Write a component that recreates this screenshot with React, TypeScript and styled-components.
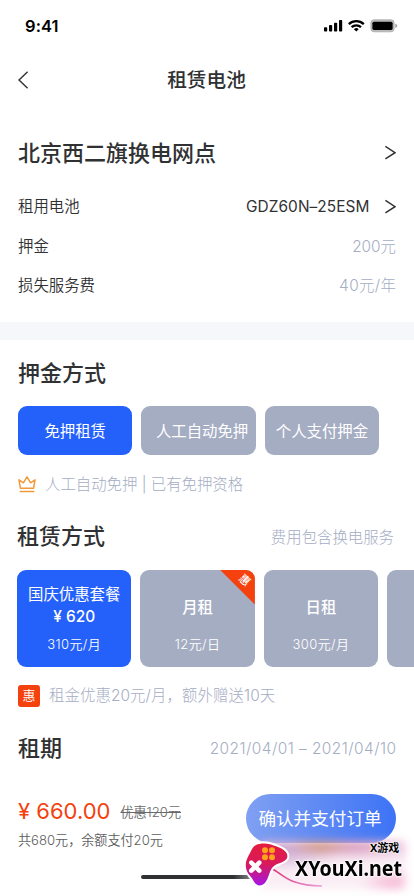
import React from 'react';
import styled, { createGlobalStyle } from 'styled-components';

const GlobalStyle = createGlobalStyle`
  * { box-sizing: border-box; }
  html, body { margin: 0; padding: 0; background: #fff; overflow: hidden; }
  body { font-family: Inter, "Noto Sans CJK SC", sans-serif; }
`;

const ink = '#303133';
const muted = '#a5adc3';
const blue = '#2461fb';
const orange = '#f4410d';

const Screen = styled.main`
  position: relative;
  width: 414px;
  height: 896px;
  overflow: hidden;
  background: #fff;
  color: ${ink};
  display: flex;
  flex-direction: column;
`;

const StatusBar = styled.div`
  height: 51px;
  flex: none;
  display: flex;
  align-items: center;
  justify-content: space-between;
  padding: 0 16px 0 25px;
`;

const Clock = styled.span`
  font: 600 16.5px/20px Inter, sans-serif;
  letter-spacing: 0.1px;
  color: #000;
`;

const NavBar = styled.header`
  height: 57px;
  flex: none;
  display: grid;
  grid-template-columns: 40px 1fr 40px;
  align-items: center;
  padding: 0 18px 0 17px;
`;

const NavTitle = styled.h1`
  margin: 0;
  text-align: center;
  font-size: 19.7px;
  line-height: 30px;
  font-weight: 500;
`;

const Details = styled.section`
  height: 214px;
  flex: none;
  padding: 24px 18px 0;
`;

const DetailRow = styled.div<{ $tall?: boolean }>`
  display: flex;
  align-items: center;
  justify-content: space-between;
  height: ${p => (p.$tall ? 41 : 39.6)}px;
  margin-bottom: ${p => (p.$tall ? 14.4 : 0)}px;
`;

const Heading = styled.h2`
  margin: 0;
  font-size: 22px;
  line-height: 32px;
  font-weight: 500;
`;

const Label = styled.span`
  font-size: 15.4px;
  line-height: 24px;
  font-weight: 350;
`;

const Value = styled.span<{ $tracking?: number }>`
  font-size: 15.4px;
  line-height: 24px;
  font-weight: 300;
  letter-spacing: ${p => p.$tracking ?? 0}px;
  margin-right: ${p => -(p.$tracking ?? 0)}px;
  color: ${muted};
`;

const Model = styled.span`
  display: flex;
  align-items: center;
  gap: 14.5px;
  font-size: 15.4px;
  line-height: 24px;
  letter-spacing: 0.08px;
`;

const Band = styled.div`
  height: 18px;
  flex: none;
  background: #f6f7fa;
`;

const Deposit = styled.section`
  height: 170px;
  flex: none;
  padding: 17px 18px 0;
`;

const DepositOptions = styled.div`
  display: flex;
  gap: 9px;
  margin-top: 17.3px;
`;

const DepositOption = styled.button<{ $active?: boolean; $shift?: number }>`
  width: 114.4px;
  height: 48.5px;
  border: 0;
  border-radius: 9px;
  padding: 2px 0 0 ${p => p.$shift ?? 0}px;
  background: ${p => (p.$active ? blue : muted)};
  color: #fff;
  font: 400 15.4px/24px Inter, "Noto Sans CJK SC", sans-serif;
  white-space: nowrap;
`;

const Note = styled.div<{ $gap: number; $top: number }>`
  display: flex;
  align-items: center;
  gap: ${p => p.$gap}px;
  height: 24px;
  margin-top: ${p => p.$top}px;
`;

const Rental = styled.section`
  height: 210px;
  flex: none;
  padding: 10px 0 0 17px;
`;

const SectionHead = styled.div`
  display: flex;
  align-items: center;
  justify-content: space-between;
  padding-right: 20px;

  ${Value} {
    padding-top: 3px;
  }
`;

const Plans = styled.div`
  display: flex;
  gap: 9px;
  margin-top: 17.6px;
  overflow: hidden;
`;

const PlanCard = styled.div<{ $active?: boolean }>`
  position: relative;
  flex: none;
  width: 114.4px;
  height: 97px;
  border-radius: 9px;
  overflow: hidden;
  background: ${p => (p.$active ? blue : muted)};
  color: #fff;
  display: flex;
  flex-direction: column;
  align-items: center;
  justify-content: flex-end;
  padding-bottom: 13px;
`;

const PlanName = styled.div<{ $gap: number; $bold?: boolean }>`
  font-size: 15.4px;
  line-height: 22px;
  font-weight: ${p => (p.$bold ? 500 : 400)};
  text-align: center;
  white-space: pre-line;
  margin-bottom: ${p => p.$gap}px;
`;

const Amount = styled.span`
  font-weight: 500;
`;

const PlanRate = styled.div`
  font-size: 13px;
  line-height: 19px;
  font-weight: 350;
  letter-spacing: 0.4px;
`;

const Ribbon = styled.div`
  position: absolute;
  top: 0;
  right: 0;
  width: 35px;
  height: 35px;
  background: ${orange};
  clip-path: polygon(0 0, 100% 0, 100% 100%);
`;

const RibbonText = styled.span`
  position: absolute;
  right: 4.5px;
  top: 4px;
  font-size: 11px;
  line-height: 13px;
  font-weight: 500;
  transform: rotate(43deg);
`;

const Tag = styled.span`
  width: 22px;
  height: 22px;
  margin-left: 1px;
  border-radius: 3px;
  background: ${orange};
  color: #fff;
  font-size: 13px;
  line-height: 21px;
  font-weight: 350;
  text-align: center;
`;

const Term = styled.section`
  height: 60px;
  flex: none;
  padding: 12px 18px 0;
`;

const TermRow = styled.div`
  display: flex;
  align-items: center;
  justify-content: space-between;

  ${Value} {
    padding-top: 2px;
  }
`;

const Footer = styled.footer`
  flex: none;
  display: flex;
  justify-content: space-between;
  padding: 14px 18px 0;
`;

const Total = styled.div`
  display: flex;
  flex-direction: column;
`;

const PriceRow = styled.div`
  display: flex;
  align-items: center;
  gap: 10px;
  height: 34px;
`;

const Price = styled.strong`
  font-size: 22px;
  line-height: 34px;
  font-weight: 400;
  color: ${orange};
  white-space: pre;
`;

const Discount = styled.s`
  font-size: 13.1px;
  line-height: 20px;
  font-weight: 350;
  color: #68696b;
  padding-top: 2px;
  text-decoration-thickness: 1px;
`;

const Balance = styled.span`
  font-size: 13.1px;
  line-height: 20px;
  margin-top: 2px;
  font-weight: 350;
  color: #5d5e61;
`;

const PayButton = styled.button`
  width: 150px;
  height: 49px;
  border: 0;
  border-radius: 25px;
  padding: 1px 2px 0 0;
  color: #fff;
  background: linear-gradient(90deg, #80a0f2, #3d73f5);
  font: 400 17.6px/26px Inter, "Noto Sans CJK SC", sans-serif;
`;

const HomeIndicator = styled.div`
  position: absolute;
  left: 141px;
  top: 875px;
  width: 132px;
  height: 4px;
  border-radius: 2px;
  background: linear-gradient(90deg, #303133 70%, #8a8a8a 85%, transparent);
`;

const Glow = styled.div`
  position: absolute;
  left: 260px;
  top: 841px;
  width: 146px;
  height: 48px;
  border-radius: 6px;
  filter: blur(4px);
  background:
    radial-gradient(ellipse 32px 10px at 60px 5px, #cf967f 0%, #cf967f00 100%),
    radial-gradient(ellipse 60px 14px at 92px 4px, #d596bb 0%, #d596bb00 100%),
    radial-gradient(ellipse 60px 22px at 24px 8px, #c9a5cf 0%, #c9a5cf00 100%),
    radial-gradient(ellipse 34px 18px at 134px 44px, #f6b5d3 0%, #f6b5d300 100%),
    linear-gradient(180deg, #eec5de 0%, #faeff6 45%, #faeef4 100%);
`;

const Watermark = styled.div`
  position: absolute;
  left: 240px;
  top: 840px;
  width: 174px;
  height: 56px;
`;

const SiteCaption = styled.span`
  position: absolute;
  left: 130px;
  top: 1px;
  color: #000;
  font: 700 11px/14px "Noto Sans", "Noto Sans CJK SC", sans-serif;
  white-space: nowrap;
  text-shadow: 0 0 2px #fff, 0 0 2px #fff, 0 0 2px #fff;
`;

const SiteName = styled.span`
  position: absolute;
  left: 55px;
  top: 14px;
  color: #000;
  font: 700 21px/28px "Noto Sans", sans-serif;
  transform-origin: left center;
  transform: scaleX(0.935);
  white-space: nowrap;
  text-shadow: 0 0 2px #fff, 0 0 2px #fff, 0 0 3px #fff;
`;

const Chevron = ({ back }: { back?: boolean }) => (
  <svg width="12" height="18" viewBox="0 0 12 18" fill="none" stroke={ink} strokeWidth="1.4">
    <path d={back ? 'M10.6 .8 2 9l8.6 8.2' : 'M1.4 2.4 11 8.700l-9.600 6.200'} />
  </svg>
);

const StatusIcons = () => (
  <svg width="76" height="16" viewBox="0 0 76 16">
    <rect x="2" y="9.2" width="3.2" height="4.3" rx=".8" />
    <rect x="7" y="7" width="3.2" height="6.5" rx=".8" />
    <rect x="12" y="4.8" width="3.2" height="8.7" rx=".8" />
    <rect x="17" y="2" width="3.2" height="11.5" rx=".8" />
    <g fill="none" stroke="#000" strokeWidth="2.3">
      <path d="M26.8 6.1a11.2 11.2 0 0 1 15 0" />
      <path d="M29.6 9.1a7 7 0 0 1 9.4 0" />
    </g>
    <path d="m34.3 13.6-2.4-2.4a3.5 3.5 0 0 1 4.8 0z" />
    <rect x="48.9" y="1.800" width="23.2" height="12" rx="3.2" fill="#bbb" stroke="#a8a8a8" strokeWidth=".8" />
    <rect x="50.4" y="3.700" width="20.2" height="8.2" rx="1.6" />
    <path d="M73.2 5.700c1.4.4 2.2 1.1 2.2 2.1s-.8 1.8-2.2 2.2z" fill="#aaa" />
  </svg>
);

const Crown = () => (
  <svg width="18" height="18" viewBox="0 0 18 18" fill="none" stroke="#f09a3c" strokeWidth="1.5" strokeLinejoin="round">
    <path d="M2.4 12.200 1 3.800l4.400 3L9 .9l3.600 5.900L17 3.800l-1.400 8.400z" />
    <path d="M2.200 15.600h13.600" strokeLinecap="round" />
  </svg>
);

const Gamepad = () => (
  <svg width="100" height="56" viewBox="0 0 100 56">
    <defs>
      <linearGradient id="pad" x1="0" y1="0" x2="0" y2="1">
        <stop offset="0" stopColor="#e51b3f" />
        <stop offset=".5" stopColor="#d81a5c" />
        <stop offset="1" stopColor="#a516e6" />
      </linearGradient>
      <linearGradient id="cord" x1="0" y1="0" x2="1" y2="0">
        <stop offset="0" stopColor="#df2869" />
        <stop offset="1" stopColor="#d850b8" stopOpacity=".5" />
      </linearGradient>
    </defs>
    <path d="M30 28C42 32 46 46 82 46" fill="none" stroke="url(#cord)" strokeWidth="1.6" />
    <path
      d="M16 5C20 3 26 3 31 4.500C38 7 45 9 47 14C48.500 19 45 21 40 23C34 25 32 27 30 32C28 37 27 42 23 44.500C18 47 15 44 13 40C11 36 7 34 6 28C5 21 8 17 10 13C12 9 13 6.500 16 5Z"
      fill="url(#pad)" stroke="#fff" strokeWidth="4" paintOrder="stroke" strokeLinejoin="round"
    />
    <g fill="#ffa31c">
      <circle cx="25" cy="10.200" r="3" />
      <circle cx="32" cy="10.200" r="3" />
      <circle cx="25" cy="17.200" r="3" />
      <circle cx="32" cy="17.200" r="3" />
    </g>
    <path d="m11.300 22.700 8 8m0-8-8 8" stroke="#fff" strokeWidth="4.500" strokeLinecap="round" />
  </svg>
);

export default function App() {
  return (
    <>
      <GlobalStyle />
      <Screen>
        <StatusBar>
          <Clock>9:41</Clock>
          <StatusIcons />
        </StatusBar>
        <NavBar>
          <Chevron back />
          <NavTitle>租赁电池</NavTitle>
        </NavBar>
        <Details>
          <DetailRow $tall>
            <Heading>北京西二旗换电网点</Heading>
            <Chevron />
          </DetailRow>
          <DetailRow>
            <Label>租用电池</Label>
            <Model>GDZ60N–25ESM<Chevron /></Model>
          </DetailRow>
          <DetailRow>
            <Label>押金</Label>
            <Value>200元</Value>
          </DetailRow>
          <DetailRow>
            <Label>损失服务费</Label>
            <Value $tracking={0.4}>40元/年</Value>
          </DetailRow>
        </Details>
        <Band />
        <Deposit>
          <Heading>押金方式</Heading>
          <DepositOptions>
            <DepositOption $active>免押租赁</DepositOption>
            <DepositOption $shift={7}>人工自动免押</DepositOption>
            <DepositOption>个人支付押金</DepositOption>
          </DepositOptions>
          <Note $gap={9} $top={18}>
            <Crown />
            <Value>人工自动免押 | 已有免押资格</Value>
          </Note>
        </Deposit>
        <Rental>
          <SectionHead>
            <Heading>租赁方式</Heading>
            <Value>费用包含换电服务</Value>
          </SectionHead>
          <Plans>
            <PlanCard $active>
              <PlanName $gap={7}>
                国庆优惠套餐{'\n'}
                <Amount>¥ 620</Amount>
              </PlanName>
              <PlanRate>310元/月</PlanRate>
            </PlanCard>
            <PlanCard>
              <PlanName $gap={16} $bold>月租</PlanName>
              <PlanRate>12元/日</PlanRate>
              <Ribbon><RibbonText>惠</RibbonText></Ribbon>
            </PlanCard>
            <PlanCard>
              <PlanName $gap={16} $bold>日租</PlanName>
              <PlanRate>300元/月</PlanRate>
            </PlanCard>
            <PlanCard />
          </Plans>
          <Note $gap={9} $top={17}>
            <Tag>惠</Tag>
            <Value $tracking={0.1}>租金优惠20元/月，额外赠送10天</Value>
          </Note>
        </Rental>
        <Term>
          <TermRow>
            <Heading>租期</Heading>
            <Value $tracking={0.46}>2021/04/01 – 2021/04/10</Value>
          </TermRow>
        </Term>
        <Footer>
          <Total>
            <PriceRow>
              <Price>¥ 660.00</Price>
              <Discount>优惠120元</Discount>
            </PriceRow>
            <Balance>共680元，余额支付20元</Balance>
          </Total>
          <PayButton>确认并支付订单</PayButton>
        </Footer>
        <HomeIndicator />
        <Glow />
        <Watermark>
          <Gamepad />
          <SiteCaption>X游戏</SiteCaption>
          <SiteName>XYouXi.net</SiteName>
        </Watermark>
      </Screen>
    </>
  );
}
